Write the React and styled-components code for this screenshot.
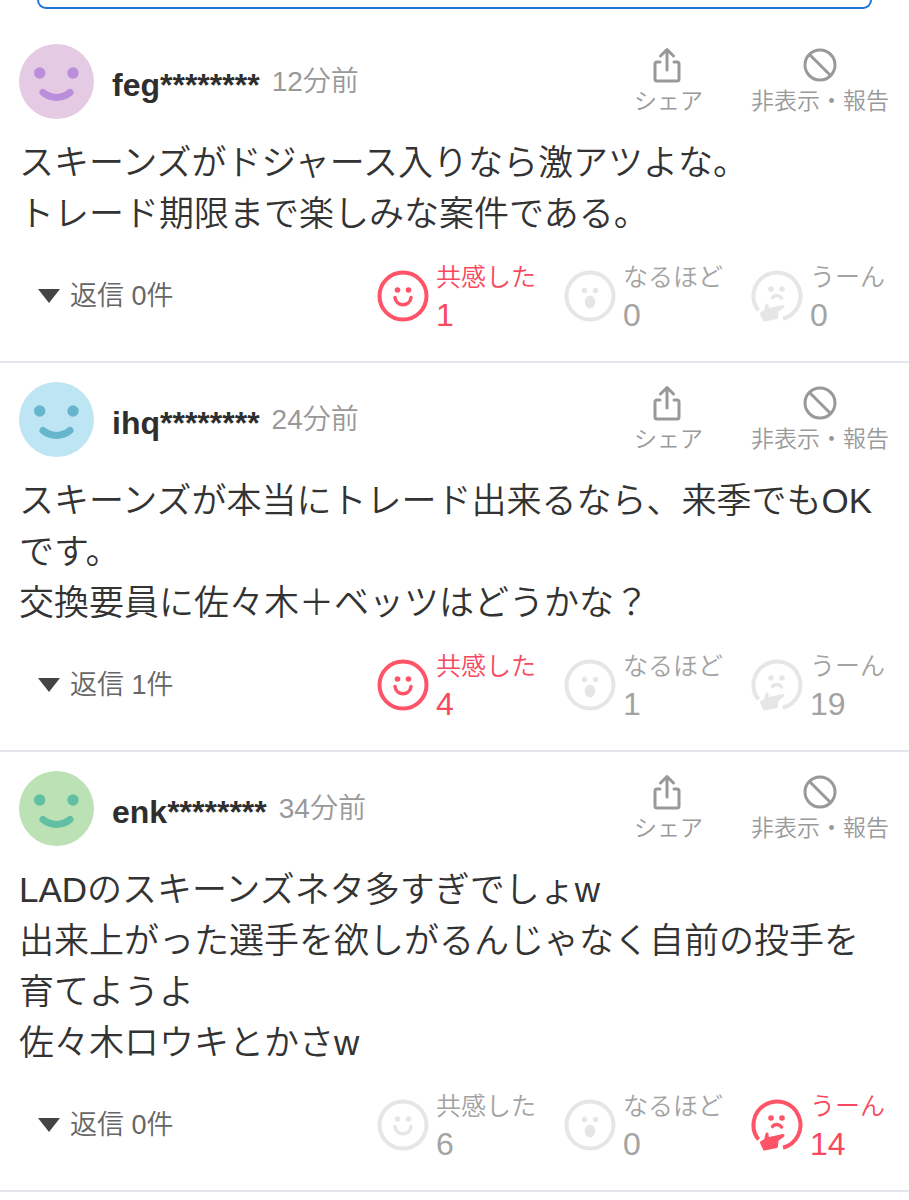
import styled, { createGlobalStyle } from "styled-components";

const GlobalStyle = createGlobalStyle`
  * {
    box-sizing: border-box;
  }
  body {
    margin: 0;
    background-color: #ffffff;
    color: #333333;
    font-family: "Liberation Sans", "Noto Sans CJK JP", sans-serif;
  }
`;

const PostBox = styled.div`
  height: 9px;
  margin: 0 37px 16px;
  border: 2px solid #1f74d8;
  border-top: none;
  border-radius: 0 0 10px 10px;
`;

const List = styled.ul`
  list-style: none;
  margin: 0;
  padding: 0;
`;

const Item = styled.li`
  padding: 19px 20px 38px 19px;
  border-bottom: 2px solid #e5e5ee;
`;

const Header = styled.header`
  display: flex;
  align-items: flex-start;
  margin-bottom: 18px;
`;

const Avatar = styled.svg`
  width: 75px;
  height: 75px;
  flex: none;
`;

const User = styled.div`
  display: flex;
  flex: 1;
  align-items: center;
  gap: 12px;
  height: 75px;
  margin-left: 18px;
`;

const Name = styled.a`
  padding-top: 6px;
  color: #2e2e2e;
  font-size: 32px;
  font-weight: bold;
  line-height: 36px;
  text-decoration: none;
`;

const Time = styled.time`
  color: #999999;
  font-size: 28px;
  font-weight: 350;
  line-height: 36px;
`;

const Actions = styled.div`
  display: flex;
  gap: 48px;
`;

const Action = styled.button`
  display: flex;
  flex-direction: column;
  align-items: center;
  gap: 2px;
  padding: 3px 0 0;
  border: none;
  background: none;
  color: #999999;
  font-family: inherit;
  font-size: 23px;
  font-weight: 350;
  line-height: 32px;
  svg {
    width: 36px;
    height: 36px;
  }
`;

const Comment = styled.p`
  margin: 0 0 30px;
  font-size: 35px;
  font-weight: 350;
  line-height: 51px;
  white-space: pre-line;
`;

const Footer = styled.footer`
  display: flex;
  align-items: center;
  justify-content: space-between;
  height: 54px;
  padding: 0 4px 0 19px;
`;

const Reply = styled.button`
  display: flex;
  align-items: center;
  gap: 10px;
  padding: 0;
  border: none;
  background: none;
  color: #666666;
  font-family: inherit;
  font-size: 27px;
  font-weight: 350;
  svg {
    width: 22px;
    height: 14px;
    fill: #444444;
  }
  span {
    padding-bottom: 5px;
  }
`;

const Reactions = styled.div`
  display: flex;
  gap: 28px;
`;

const Reaction = styled.button`
  display: flex;
  align-items: center;
  gap: 7px;
  padding: 0;
  border: none;
  background: none;
  color: ${(props) => (props.$active ? "#f8495f" : "#a3a3a3")};
  font-family: inherit;
  font-weight: 350;
  text-align: left;
  svg {
    width: 52px;
    height: 52px;
    color: ${(props) => (props.$active ? "#ff5367" : "#e6e6e6")};
  }
`;

const Label = styled.span`
  display: block;
  font-size: 25px;
  line-height: 38px;
`;

const Count = styled.span`
  display: block;
  font-size: 32px;
  line-height: 38px;
`;

const comments = [
  {
    name: "feg********",
    time: "12分前",
    face: "#e5cae3",
    parts: "#ba8edb",
    text: "スキーンズがドジャース入りなら激アツよな。\nトレード期限まで楽しみな案件である。",
    replies: 0,
    counts: [1, 0, 0],
    active: 0,
  },
  {
    name: "ihq********",
    time: "24分前",
    face: "#bde5f3",
    parts: "#66b5cd",
    text: "スキーンズが本当にトレード出来るなら、来季でもOKです。\n交換要員に佐々木＋ベッツはどうかな？",
    replies: 1,
    counts: [4, 1, 19],
    active: 0,
  },
  {
    name: "enk********",
    time: "34分前",
    face: "#bce1b5",
    parts: "#62bfa2",
    text: "LADのスキーンズネタ多すぎでしょw\n出来上がった選手を欲しがるんじゃなく自前の投手を育てようよ\n佐々木ロウキとかさw",
    replies: 0,
    counts: [6, 0, 14],
    active: 2,
  },
];

const ShareIcon = () => (
  <svg
    viewBox="0 0 36 36"
    fill="none"
    stroke="currentColor"
    strokeWidth="3"
    strokeLinecap="round"
    strokeLinejoin="round"
  >
    <path d="M9 15H6q-2 0-2 2v15q0 2 2 2h20q2 0 2-2V17q0-2-2-2h-3M16 23V3M9.5 9L16 2.5 22.5 9" />
  </svg>
);

const BlockIcon = () => (
  <svg viewBox="0 0 36 36" fill="none" stroke="currentColor" strokeWidth="3">
    <circle cx="18" cy="18" r="15" />
    <path d="M7.5 7.5l21 21" />
  </svg>
);

const EmpathyIcon = () => (
  <svg viewBox="0 0 52 52" fill="none" stroke="currentColor">
    <circle cx="26" cy="26" r="23.5" strokeWidth="4" />
    <circle cx="20.5" cy="20" r="2.8" fill="currentColor" stroke="none" />
    <circle cx="31.5" cy="20" r="2.8" fill="currentColor" stroke="none" />
    <path d="M18 27.5c1 9.5 15 9.5 16 0" strokeWidth="3.5" strokeLinecap="round" />
  </svg>
);

const InsightIcon = () => (
  <svg viewBox="0 0 52 52" fill="currentColor">
    <circle
      cx="26"
      cy="26"
      r="23.5"
      fill="none"
      stroke="currentColor"
      strokeWidth="4"
    />
    <circle cx="20.5" cy="20.5" r="2.7" />
    <circle cx="31.5" cy="20.5" r="2.7" />
    <ellipse cx="26" cy="32" rx="5.3" ry="6.5" />
  </svg>
);

const HmmIcon = () => (
  <svg viewBox="0 0 52 52" fill="none" stroke="currentColor">
    <path d="M7.5 40.5A23.5 23.5 0 1 1 32 48.7" strokeWidth="4" />
    <circle cx="20" cy="19" r="2.8" fill="currentColor" stroke="none" />
    <circle cx="31" cy="19" r="2.8" fill="currentColor" stroke="none" />
    <path d="M21.5 27.5c2-3 7-2.5 9 .5" strokeWidth="3.5" strokeLinecap="round" />
    <path
      d="M16 35l.5 5L32 36.500 26 41l-.5 6.500L13.500 50 10.500 43.500 14.500 41z"
      fill="currentColor"
      strokeWidth="3"
      strokeLinejoin="round"
    />
  </svg>
);

const reactions = [
  { label: "共感した", Icon: EmpathyIcon },
  { label: "なるほど", Icon: InsightIcon },
  { label: "うーん", Icon: HmmIcon },
];

function CommentItem({ comment }) {
  return (
    <Item>
      <Header>
        <Avatar viewBox="0 0 75 75">
          <circle cx="37.5" cy="37.5" r="37.5" fill={comment.face} />
          <circle cx="20.7" cy="29" r="5.7" fill={comment.parts} />
          <circle cx="54" cy="29" r="5.7" fill={comment.parts} />
          <path
            d="M24 48.5c8 6.5 19 6.5 27 0"
            fill="none"
            stroke={comment.parts}
            strokeWidth="7"
            strokeLinecap="round"
          />
        </Avatar>
        <User>
          <Name href="#">{comment.name}</Name>
          <Time>{comment.time}</Time>
        </User>
        <Actions>
          <Action>
            <ShareIcon />
            シェア
          </Action>
          <Action>
            <BlockIcon />
            非表示・報告
          </Action>
        </Actions>
      </Header>
      <Comment>{comment.text}</Comment>
      <Footer>
        <Reply>
          <svg viewBox="0 0 22 14">
            <path d="M0 0h22L11 14z" />
          </svg>
          <span>返信 {comment.replies}件</span>
        </Reply>
        <Reactions>
          {reactions.map(({ label, Icon }, index) => (
            <Reaction key={label} $active={comment.active === index}>
              <Icon />
              <span>
                <Label>{label}</Label>
                <Count>{comment.counts[index]}</Count>
              </span>
            </Reaction>
          ))}
        </Reactions>
      </Footer>
    </Item>
  );
}

function App() {
  return (
    <>
      <GlobalStyle />
      <PostBox />
      <List>
        {comments.map((comment) => (
          <CommentItem key={comment.name} comment={comment} />
        ))}
      </List>
    </>
  );
}

export default App;
